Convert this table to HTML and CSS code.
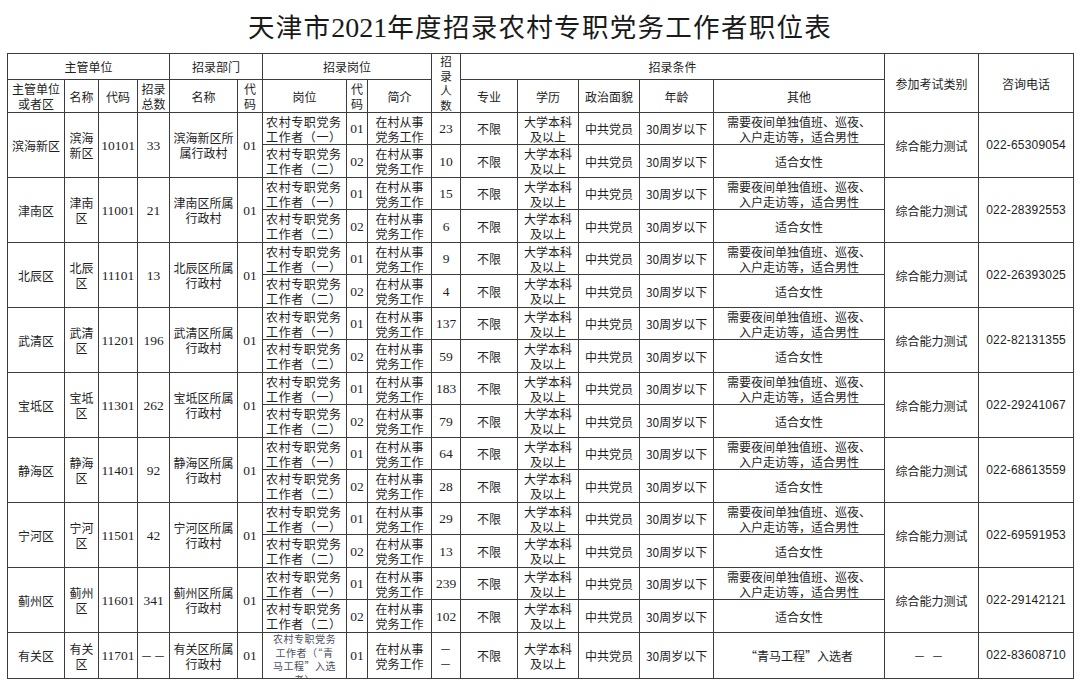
FILE: index.html
```html
<!DOCTYPE html>
<html lang="zh-CN">
<head>
<meta charset="utf-8">
<title>天津市2021年度招录农村专职党务工作者职位表</title>
<link rel="stylesheet" href="styles.css">
</head>
<body>
<h1 class="title">天津市<span class="yr">2021</span>年度招录农村专职党务工作者职位表</h1>
<table class="grid">
<colgroup>
<col style="width:57px"><col style="width:34px"><col style="width:39px"><col style="width:32px">
<col style="width:68px"><col style="width:25px">
<col style="width:84px"><col style="width:21px"><col style="width:64px">
<col style="width:29px">
<col style="width:57px"><col style="width:61px"><col style="width:61px"><col style="width:74px"><col style="width:171px">
<col style="width:94px"><col style="width:95px">
</colgroup>
<thead>
<tr class="h1">
<td colspan="4">主管单位</td>
<td colspan="2">招录部门</td>
<td colspan="3">招录岗位</td>
<td rowspan="2" class="vert">招<br>录<br>人<br>数</td>
<td colspan="5">招录条件</td>
<td rowspan="2">参加考试类别</td>
<td rowspan="2">咨询电话</td>
</tr>
<tr class="h2">
<td>主管单位<br>或者区</td><td>名称</td><td>代码</td><td>招录<br>总数</td>
<td>名称</td><td>代<br>码</td>
<td>岗位</td><td>代<br>码</td><td>简介</td>
<td>专业</td><td>学历</td><td>政治面貌</td><td>年龄</td><td>其他</td>
</tr>
</thead>
<tbody>
<tr class="ra">
<td rowspan="2">滨海新区</td><td rowspan="2">滨海<br>新区</td><td rowspan="2" class="num">10101</td><td rowspan="2" class="num">33</td><td rowspan="2">滨海新区所<br>属行政村</td><td rowspan="2" class="num">01</td>
<td class="post">农村专职党务<br>工作者（一）</td><td class="num">01</td><td>在村从事<br>党务工作</td><td class="num">23</td><td>不限</td><td>大学本科<br>及以上</td><td>中共党员</td><td>30周岁以下</td><td>需要夜间单独值班、巡夜、<br>入户走访等，适合男性</td>
<td rowspan="2">综合能力测试</td><td rowspan="2" class="tel">022-65309054</td>
</tr>
<tr class="rb">
<td class="post">农村专职党务<br>工作者（二）</td><td class="num">02</td><td>在村从事<br>党务工作</td><td class="num">10</td><td>不限</td><td>大学本科<br>及以上</td><td>中共党员</td><td>30周岁以下</td><td>适合女性</td>
</tr>
<tr class="ra">
<td rowspan="2">津南区</td><td rowspan="2">津南<br>区</td><td rowspan="2" class="num">11001</td><td rowspan="2" class="num">21</td><td rowspan="2">津南区所属<br>行政村</td><td rowspan="2" class="num">01</td>
<td class="post">农村专职党务<br>工作者（一）</td><td class="num">01</td><td>在村从事<br>党务工作</td><td class="num">15</td><td>不限</td><td>大学本科<br>及以上</td><td>中共党员</td><td>30周岁以下</td><td>需要夜间单独值班、巡夜、<br>入户走访等，适合男性</td>
<td rowspan="2">综合能力测试</td><td rowspan="2" class="tel">022-28392553</td>
</tr>
<tr class="rb">
<td class="post">农村专职党务<br>工作者（二）</td><td class="num">02</td><td>在村从事<br>党务工作</td><td class="num">6</td><td>不限</td><td>大学本科<br>及以上</td><td>中共党员</td><td>30周岁以下</td><td>适合女性</td>
</tr>
<tr class="ra">
<td rowspan="2">北辰区</td><td rowspan="2">北辰<br>区</td><td rowspan="2" class="num">11101</td><td rowspan="2" class="num">13</td><td rowspan="2">北辰区所属<br>行政村</td><td rowspan="2" class="num">01</td>
<td class="post">农村专职党务<br>工作者（一）</td><td class="num">01</td><td>在村从事<br>党务工作</td><td class="num">9</td><td>不限</td><td>大学本科<br>及以上</td><td>中共党员</td><td>30周岁以下</td><td>需要夜间单独值班、巡夜、<br>入户走访等，适合男性</td>
<td rowspan="2">综合能力测试</td><td rowspan="2" class="tel">022-26393025</td>
</tr>
<tr class="rb">
<td class="post">农村专职党务<br>工作者（二）</td><td class="num">02</td><td>在村从事<br>党务工作</td><td class="num">4</td><td>不限</td><td>大学本科<br>及以上</td><td>中共党员</td><td>30周岁以下</td><td>适合女性</td>
</tr>
<tr class="ra">
<td rowspan="2">武清区</td><td rowspan="2">武清<br>区</td><td rowspan="2" class="num">11201</td><td rowspan="2" class="num">196</td><td rowspan="2">武清区所属<br>行政村</td><td rowspan="2" class="num">01</td>
<td class="post">农村专职党务<br>工作者（一）</td><td class="num">01</td><td>在村从事<br>党务工作</td><td class="num">137</td><td>不限</td><td>大学本科<br>及以上</td><td>中共党员</td><td>30周岁以下</td><td>需要夜间单独值班、巡夜、<br>入户走访等，适合男性</td>
<td rowspan="2">综合能力测试</td><td rowspan="2" class="tel">022-82131355</td>
</tr>
<tr class="rb">
<td class="post">农村专职党务<br>工作者（二）</td><td class="num">02</td><td>在村从事<br>党务工作</td><td class="num">59</td><td>不限</td><td>大学本科<br>及以上</td><td>中共党员</td><td>30周岁以下</td><td>适合女性</td>
</tr>
<tr class="ra">
<td rowspan="2">宝坻区</td><td rowspan="2">宝坻<br>区</td><td rowspan="2" class="num">11301</td><td rowspan="2" class="num">262</td><td rowspan="2">宝坻区所属<br>行政村</td><td rowspan="2" class="num">01</td>
<td class="post">农村专职党务<br>工作者（一）</td><td class="num">01</td><td>在村从事<br>党务工作</td><td class="num">183</td><td>不限</td><td>大学本科<br>及以上</td><td>中共党员</td><td>30周岁以下</td><td>需要夜间单独值班、巡夜、<br>入户走访等，适合男性</td>
<td rowspan="2">综合能力测试</td><td rowspan="2" class="tel">022-29241067</td>
</tr>
<tr class="rb">
<td class="post">农村专职党务<br>工作者（二）</td><td class="num">02</td><td>在村从事<br>党务工作</td><td class="num">79</td><td>不限</td><td>大学本科<br>及以上</td><td>中共党员</td><td>30周岁以下</td><td>适合女性</td>
</tr>
<tr class="ra">
<td rowspan="2">静海区</td><td rowspan="2">静海<br>区</td><td rowspan="2" class="num">11401</td><td rowspan="2" class="num">92</td><td rowspan="2">静海区所属<br>行政村</td><td rowspan="2" class="num">01</td>
<td class="post">农村专职党务<br>工作者（一）</td><td class="num">01</td><td>在村从事<br>党务工作</td><td class="num">64</td><td>不限</td><td>大学本科<br>及以上</td><td>中共党员</td><td>30周岁以下</td><td>需要夜间单独值班、巡夜、<br>入户走访等，适合男性</td>
<td rowspan="2">综合能力测试</td><td rowspan="2" class="tel">022-68613559</td>
</tr>
<tr class="rb">
<td class="post">农村专职党务<br>工作者（二）</td><td class="num">02</td><td>在村从事<br>党务工作</td><td class="num">28</td><td>不限</td><td>大学本科<br>及以上</td><td>中共党员</td><td>30周岁以下</td><td>适合女性</td>
</tr>
<tr class="ra">
<td rowspan="2">宁河区</td><td rowspan="2">宁河<br>区</td><td rowspan="2" class="num">11501</td><td rowspan="2" class="num">42</td><td rowspan="2">宁河区所属<br>行政村</td><td rowspan="2" class="num">01</td>
<td class="post">农村专职党务<br>工作者（一）</td><td class="num">01</td><td>在村从事<br>党务工作</td><td class="num">29</td><td>不限</td><td>大学本科<br>及以上</td><td>中共党员</td><td>30周岁以下</td><td>需要夜间单独值班、巡夜、<br>入户走访等，适合男性</td>
<td rowspan="2">综合能力测试</td><td rowspan="2" class="tel">022-69591953</td>
</tr>
<tr class="rb">
<td class="post">农村专职党务<br>工作者（二）</td><td class="num">02</td><td>在村从事<br>党务工作</td><td class="num">13</td><td>不限</td><td>大学本科<br>及以上</td><td>中共党员</td><td>30周岁以下</td><td>适合女性</td>
</tr>
<tr class="ra">
<td rowspan="2">蓟州区</td><td rowspan="2">蓟州<br>区</td><td rowspan="2" class="num">11601</td><td rowspan="2" class="num">341</td><td rowspan="2">蓟州区所属<br>行政村</td><td rowspan="2" class="num">01</td>
<td class="post">农村专职党务<br>工作者（一）</td><td class="num">01</td><td>在村从事<br>党务工作</td><td class="num">239</td><td>不限</td><td>大学本科<br>及以上</td><td>中共党员</td><td>30周岁以下</td><td>需要夜间单独值班、巡夜、<br>入户走访等，适合男性</td>
<td rowspan="2">综合能力测试</td><td rowspan="2" class="tel">022-29142121</td>
</tr>
<tr class="rb">
<td class="post">农村专职党务<br>工作者（二）</td><td class="num">02</td><td>在村从事<br>党务工作</td><td class="num">102</td><td>不限</td><td>大学本科<br>及以上</td><td>中共党员</td><td>30周岁以下</td><td>适合女性</td>
</tr>
<tr class="rl">
<td>有关区</td><td>有关<br>区</td><td class="num">11701</td><td class="dash">－－</td><td>有关区所属<br>行政村</td><td class="num">01</td>
<td class="post small"><div class="clip"><div class="inner">农村专职党务<br>工作者（“青<br>马工程”入选<br>者）</div></div></td><td class="num">01</td><td>在村从事<br>党务工作</td><td class="dash">－<br>－</td><td>不限</td><td>大学本科<br>及以上</td><td>中共党员</td><td>30周岁以下</td><td>“青马工程”入选者</td>
<td class="dash wide">－－</td><td class="tel">022-83608710</td>
</tr>
</tbody>
</table>
</body>
</html>
```
FILE: styles.css
```css
html, body {
  margin: 0;
  padding: 0;
  background: #ffffff;
}
body {
  font-family: "Noto Sans CJK SC", sans-serif;
  color: #1e1e1e;
  width: 1080px;
  height: 690px;
  overflow: hidden;
}
.title {
  margin: 0;
  height: 53px;
  line-height: 52px;
  text-align: center;
  font-weight: normal;
  font-size: 26.5px;
  letter-spacing: 1.3px;
  color: #1a1a1a;
  font-family: "Noto Sans CJK SC", sans-serif;
}
.title .yr {
  font-family: "Liberation Serif", serif;
  font-size: 28px;
  letter-spacing: 0;
}
.grid {
  margin-left: 7px;
  width: 1067px;
  border-collapse: collapse;
  table-layout: fixed;
  font-size: 12px;
  line-height: 15px;
}
.grid td {
  border: 1px solid #3c3c3c;
  padding: 0 1px;
  text-align: center;
  vertical-align: middle;
  overflow: hidden;
  white-space: nowrap;
}
.grid .h1 { height: 26px; }
.grid .h2 { height: 33px; }
.grid .ra { height: 32px; }
.grid .rb { height: 33px; }
.grid .rl { height: 46px; }
.grid .vert {
  font-size: 11.5px;
  line-height: 14.5px;
  padding: 0;
}
.grid .num {
  font-family: "Liberation Serif", serif;
  font-size: 13.5px;
}
.grid .tel {
  font-family: "Liberation Sans", sans-serif;
  font-size: 12px;
  letter-spacing: 0.2px;
}
.grid .post {
  text-align: left;
  padding-left: 3px;
  letter-spacing: 0.6px;
}
.grid .post.small {
  text-align: center;
  padding: 0;
  font-size: 10px;
  line-height: 13.5px;
  color: #4b4f5e;
  letter-spacing: 0.5px;
  vertical-align: top;
}
.grid .clip {
  height: 45px;
  overflow: hidden;
}
.grid .inner {
  margin-top: -1px;
}
.grid .dash {
  letter-spacing: 1px;
}
.grid .dash.wide {
  letter-spacing: 6px;
}
```
